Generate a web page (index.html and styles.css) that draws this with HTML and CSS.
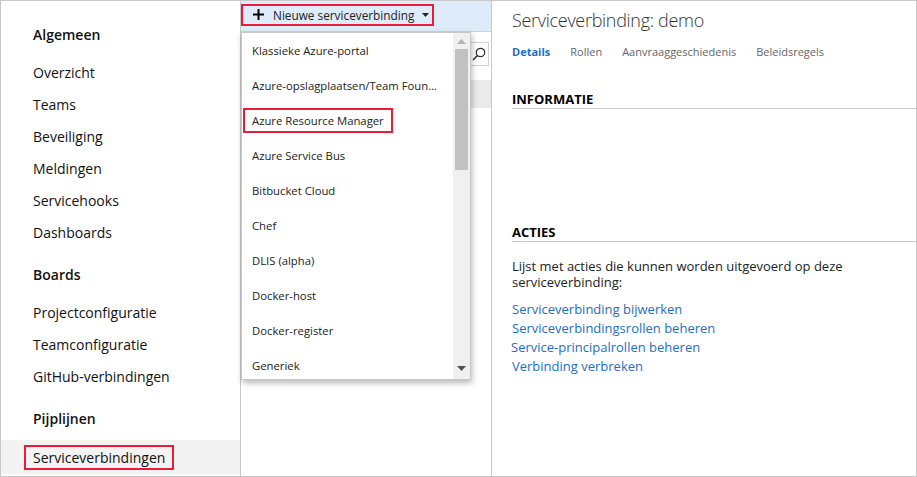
FILE: index.html
```html
<!DOCTYPE html>
<html lang="nl">
<head>
<meta charset="utf-8">
<title>Serviceverbinding: demo</title>
<link rel="stylesheet" href="styles.css">
</head>
<body>
<div class="frame">
  <nav class="sidebar">
    <div class="nav-section">
      <div class="nav-heading">Algemeen</div>
      <div class="nav-item">Overzicht</div>
      <div class="nav-item">Teams</div>
      <div class="nav-item">Beveiliging</div>
      <div class="nav-item">Meldingen</div>
      <div class="nav-item">Servicehooks</div>
      <div class="nav-item">Dashboards</div>
    </div>
    <div class="nav-section">
      <div class="nav-heading">Boards</div>
      <div class="nav-item">Projectconfiguratie</div>
      <div class="nav-item">Teamconfiguratie</div>
      <div class="nav-item">GitHub-verbindingen</div>
    </div>
    <div class="nav-section">
      <div class="nav-heading last">Pijplijnen</div>
      <div class="nav-item selected"><span class="mark">Serviceverbindingen</span></div>
    </div>
  </nav>

  <section class="middle">
    <div class="toolbar">
      <div class="new-btn">
        <svg class="plus" width="11" height="11" viewBox="0 0 11 11"><path d="M5.5 0v11M0 5.5h11" stroke="#000" stroke-width="2"/></svg>
        <span class="btn-label">Nieuwe serviceverbinding</span>
        <svg class="caret" width="7" height="4" viewBox="0 0 7 4"><path d="M0 0h7L3.5 4z" fill="#222"/></svg>
      </div>
    </div>
    <div class="search">
      <svg width="14" height="14" viewBox="0 0 14 14"><circle cx="8.5" cy="5.5" r="4.2" fill="none" stroke="#333" stroke-width="1.3"/><path d="M5.5 8.5L1 13" stroke="#333" stroke-width="1.6"/></svg>
    </div>
    <div class="list-row"></div>

    <div class="dropdown">
      <ul class="options">
        <li>Klassieke Azure-portal</li>
        <li>Azure-opslagplaatsen/Team Foun...</li>
        <li><span class="mark">Azure Resource Manager</span></li>
        <li>Azure Service Bus</li>
        <li>Bitbucket Cloud</li>
        <li>Chef</li>
        <li>DLIS (alpha)</li>
        <li>Docker-host</li>
        <li>Docker-register</li>
        <li>Generiek</li>
      </ul>
      <div class="scrollbar">
        <svg class="arrow" width="9" height="5" viewBox="0 0 9 5"><path d="M0 5h9L4.5 0z" fill="#b4b4b4"/></svg>
        <div class="thumb"></div>
        <div class="track-rest"></div>
        <svg class="arrow" width="9" height="5" viewBox="0 0 9 5"><path d="M0 0h9L4.5 5z" fill="#505050"/></svg>
      </div>
    </div>
  </section>

  <main class="detail">
    <h1 class="title">Serviceverbinding: demo</h1>
    <div class="tabs">
      <span class="tab active">Details</span>
      <span class="tab">Rollen</span>
      <span class="tab">Aanvraaggeschiedenis</span>
      <span class="tab">Beleidsregels</span>
    </div>
    <h2 class="section-title">INFORMATIE</h2>
    <div class="info"></div>
    <h2 class="section-title">ACTIES</h2>
    <p class="desc">Lijst met acties die kunnen worden uitgevoerd op deze serviceverbinding:</p>
    <div class="links">
      <a class="link">Serviceverbinding bijwerken</a>
      <a class="link">Serviceverbindingsrollen beheren</a>
      <a class="link shift">Service-principalrollen beheren</a>
      <a class="link">Verbinding verbreken</a>
    </div>
  </main>
</div>
</body>
</html>
```

FILE: styles.css
```css
* { box-sizing: border-box; }
html, body { margin: 0; padding: 0; }
body {
  font-family: "Open Sans", "Noto Sans", "Liberation Sans", sans-serif;
  color: #333;
  background: #fff;
}

.frame {
  width: 917px;
  height: 477px;
  border: 1px solid #c8c8c8;
  display: flex;
  overflow: hidden;
}

/* Sidebar */
.sidebar {
  width: 240px;
  flex: none;
  border-right: 1px solid #c8c8c8;
  padding-top: 18px;
}
.nav-section { margin-bottom: 10px; }
.nav-heading {
  font-size: 14px;
  font-weight: 600;
  line-height: 32px;
  padding-left: 32px;
  margin-bottom: 6px;
  color: #111;
}
.nav-heading.last { margin-bottom: 5px; }
.nav-item {
  font-size: 14px;
  line-height: 32px;
  height: 32px;
  padding-left: 32px;
  color: #111;
}
.nav-item.selected {
  height: 34px;
  background: #f3f3f3;
  display: flex;
  align-items: center;
}
.mark {
  display: inline-block;
  border: 2px solid #e81d3c;
  padding: 0 7px;
  margin-left: -9px;
  line-height: 21px;
}

/* Middle column */
.middle {
  width: 251px;
  flex: none;
  border-right: 1px solid #c8c8c8;
  position: relative;
}
.toolbar {
  height: 31px;
  background: #deecf9;
  border-bottom: 1px solid #c3d3e3;
  padding-top: 2px;
}
.new-btn {
  display: inline-flex;
  align-items: center;
  width: 193px;
  height: 22px;
  border: 2px solid #e81d3c;
  padding-left: 10px;
  font-size: 11.8px;
  color: #222;
  white-space: nowrap;
}
.new-btn .plus { flex: none; }
.btn-label { margin-left: 9px; }
.new-btn .caret { margin-left: 8px; flex: none; }

.search {
  margin: 10px 2px 0 9px;
  height: 24px;
  border: 1px solid #d0d0d0;
  display: flex;
  justify-content: flex-end;
  align-items: center;
  padding-right: 2px;
}
.list-row {
  margin-top: 14px;
  height: 28px;
  background: #eaeaea;
}

.dropdown {
  position: absolute;
  top: 31px;
  left: 0;
  width: 230px;
  height: 348px;
  background: #fff;
  border: 1px solid #c8c8c8;
  box-shadow: 1px 3px 6px rgba(0, 0, 0, 0.28);
  display: flex;
  z-index: 2;
}
.options {
  list-style: none;
  margin: 0;
  padding: 0;
  flex: 1;
  overflow: hidden;
}
.options li {
  height: 35px;
  line-height: 35px;
  padding-left: 10px;
  font-size: 11.3px;
  color: #222;
  white-space: nowrap;
  display: flex;
  align-items: center;
}
.scrollbar {
  width: 17px;
  flex: none;
  background: #f0f0f0;
  display: flex;
  flex-direction: column;
  align-items: center;
  padding-top: 6px;
  padding-bottom: 8px;
}
.scrollbar .arrow { flex: none; }
.thumb {
  width: 13px;
  height: 121px;
  background: #c1c1c1;
  margin-top: 5px;
}
.track-rest { flex: 1; }

/* Detail panel */
.detail {
  flex: 1;
  padding: 5px 0 0 20px;
}
.title {
  margin: 0;
  font-size: 18px;
  font-weight: 300;
  letter-spacing: -0.3px;
  line-height: 28px;
  color: #333;
}
.tabs {
  margin-top: 8px;
  display: flex;
  gap: 20px;
  font-size: 11px;
  line-height: 20px;
  color: #666;
}
.tab.active { color: #1e6fc0; font-weight: 700; }
.section-title {
  margin: 29px 0 0 0;
  font-size: 13px;
  font-weight: 700;
  line-height: 17px;
  color: #000;
  border-bottom: 1px solid #c8c8c8;
}
.info { height: 115px; }
.info + .section-title { margin-top: 0; }
.desc {
  margin: 16px 0 0 0;
  font-size: 13px;
  line-height: 16px;
  width: 380px;
  color: #222;
}
.links {
  margin-top: 10px;
  display: flex;
  flex-direction: column;
  align-items: flex-start;
}
.link {
  font-size: 13px;
  line-height: 19px;
  color: #1e6fc0;
}
.link.shift { margin-left: -1px; }
```
